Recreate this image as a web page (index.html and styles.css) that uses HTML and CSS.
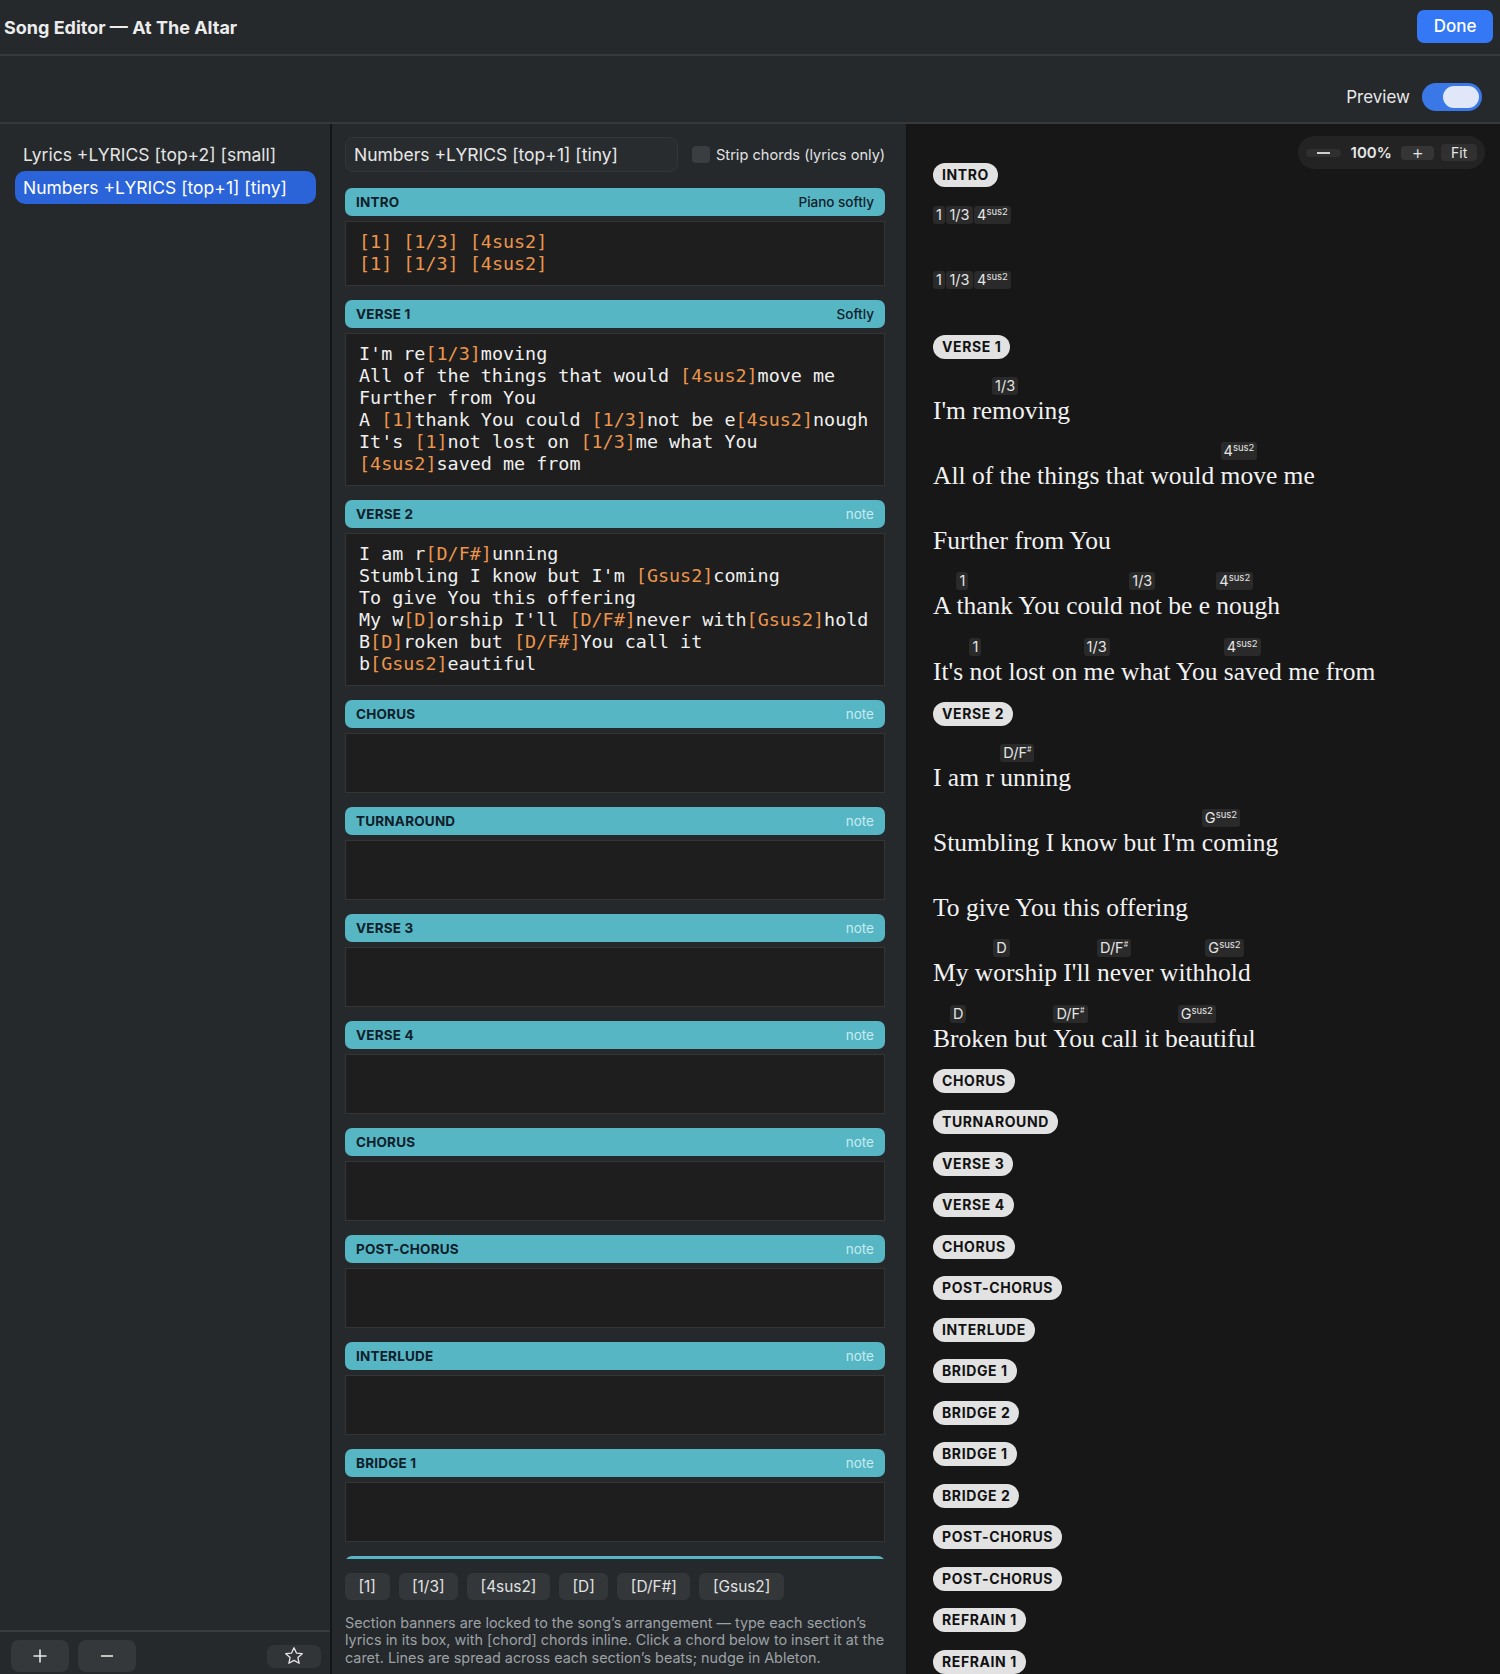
FILE: index.html
```html
<!DOCTYPE html>
<html lang="en">
<head>
    <meta charset="UTF-8">
    <meta name="viewport" content="width=device-width, initial-scale=1.0">
    <title>Song Editor — At The Altar</title>
    <link rel="stylesheet" href="styles.css">
</head>
<body>

    <header class="topbar">
        <div class="title">Song Editor — At The Altar</div>
        <button class="done">Done</button>
    </header>

    <div class="toolbar">
        <span class="toolbar-label">Preview</span>
        <span class="toggle on"><span class="knob"></span></span>
    </div>

    <div class="main">
        <!-- arrangement list -->
        <aside class="sidebar">
            <div class="side-list">
                <div class="side-item">Lyrics +LYRICS [top+2] [small]</div>
                <div class="side-item active">Numbers +LYRICS [top+1] [tiny]</div>
            </div>
            <div class="side-foot">
                <button class="foot-btn">
                    <svg width="16" height="16" viewBox="0 0 16 16"><path d="M8 1.5v13M1.5 8h13" stroke="#e6e6e6" stroke-width="1.6" fill="none"/></svg>
                </button>
                <button class="foot-btn">
                    <svg width="16" height="16" viewBox="0 0 16 16"><path d="M2 8h12" stroke="#e6e6e6" stroke-width="1.6" fill="none"/></svg>
                </button>
                <button class="foot-btn star">
                    <svg width="20" height="20" viewBox="0 0 20 20"><path d="M10 1.8l2.45 5.3 5.8.6-4.35 3.9 1.25 5.7L10 14.4l-5.15 2.9 1.25-5.7L1.75 7.7l5.8-.6z" stroke="#e6e6e6" stroke-width="1.3" stroke-linejoin="round" fill="none"/></svg>
                </button>
            </div>
        </aside>

        <!-- editor -->
        <section class="editor">
            <div class="title-row">
                <div class="name-input">Numbers +LYRICS [top+1] [tiny]</div>
                <label class="strip"><span class="checkbox"></span>Strip chords (lyrics only)</label>
            </div>

            <div class="sections">
                <div class="section">
                    <div class="banner"><span class="banner-name">INTRO</span><span class="banner-note set">Piano softly</span></div>
                    <div class="box"><span class="ch">[1]</span> <span class="ch">[1/3]</span> <span class="ch">[4sus2]</span>
<span class="ch">[1]</span> <span class="ch">[1/3]</span> <span class="ch">[4sus2]</span></div>
                </div>
                <div class="section">
                    <div class="banner"><span class="banner-name">VERSE 1</span><span class="banner-note set">Softly</span></div>
                    <div class="box">I'm re<span class="ch">[1/3]</span>moving
All of the things that would <span class="ch">[4sus2]</span>move me
Further from You
A <span class="ch">[1]</span>thank You could <span class="ch">[1/3]</span>not be e<span class="ch">[4sus2]</span>nough
It's <span class="ch">[1]</span>not lost on <span class="ch">[1/3]</span>me what You
<span class="ch">[4sus2]</span>saved me from</div>
                </div>
                <div class="section">
                    <div class="banner"><span class="banner-name">VERSE 2</span><span class="banner-note">note</span></div>
                    <div class="box">I am r<span class="ch">[D/F#]</span>unning
Stumbling I know but I'm <span class="ch">[Gsus2]</span>coming
To give You this offering
My w<span class="ch">[D]</span>orship I'll <span class="ch">[D/F#]</span>never with<span class="ch">[Gsus2]</span>hold
B<span class="ch">[D]</span>roken but <span class="ch">[D/F#]</span>You call it
b<span class="ch">[Gsus2]</span>eautiful</div>
                </div>
                <div class="section">
                    <div class="banner"><span class="banner-name">CHORUS</span><span class="banner-note">note</span></div>
                    <div class="box"></div>
                </div>
                <div class="section">
                    <div class="banner"><span class="banner-name">TURNAROUND</span><span class="banner-note">note</span></div>
                    <div class="box"></div>
                </div>
                <div class="section">
                    <div class="banner"><span class="banner-name">VERSE 3</span><span class="banner-note">note</span></div>
                    <div class="box"></div>
                </div>
                <div class="section">
                    <div class="banner"><span class="banner-name">VERSE 4</span><span class="banner-note">note</span></div>
                    <div class="box"></div>
                </div>
                <div class="section">
                    <div class="banner"><span class="banner-name">CHORUS</span><span class="banner-note">note</span></div>
                    <div class="box"></div>
                </div>
                <div class="section">
                    <div class="banner"><span class="banner-name">POST-CHORUS</span><span class="banner-note">note</span></div>
                    <div class="box"></div>
                </div>
                <div class="section">
                    <div class="banner"><span class="banner-name">INTERLUDE</span><span class="banner-note">note</span></div>
                    <div class="box"></div>
                </div>
                <div class="section">
                    <div class="banner"><span class="banner-name">BRIDGE 1</span><span class="banner-note">note</span></div>
                    <div class="box"></div>
                </div>
                <div class="section">
                    <div class="banner"><span class="banner-name">BRIDGE 2</span><span class="banner-note">note</span></div>
                    <div class="box"></div>
                </div>
            </div>

            <div class="chord-bar">
                <button class="chord-btn">[1]</button>
                <button class="chord-btn">[1/3]</button>
                <button class="chord-btn">[4sus2]</button>
                <button class="chord-btn">[D]</button>
                <button class="chord-btn">[D/F#]</button>
                <button class="chord-btn">[Gsus2]</button>
            </div>
            <p class="help">Section banners are locked to the song’s arrangement — type each section’s lyrics in its box, with [chord] chords inline. Click a chord below to insert it at the caret. Lines are spread across each section’s beats; nudge in Ableton.</p>
        </section>

        <!-- preview -->
        <section class="preview">
            <div class="zoom">
                <span class="zoom-minus"><span></span></span>
                <span class="zoom-value">100%</span>
                <span class="zoom-plus">+</span>
                <span class="zoom-fit">Fit</span>
            </div>

            <div class="psec">
                <div class="pill">INTRO</div>
                <div class="pline"><span class="seg"><span class="chip">1</span> </span><span class="seg"><span class="chip">1/3</span> </span><span class="seg"><span class="chip">4<sup>sus2</sup></span></span></div>
                <div class="pline"><span class="seg"><span class="chip">1</span> </span><span class="seg"><span class="chip">1/3</span> </span><span class="seg"><span class="chip">4<sup>sus2</sup></span></span></div>
            </div>

            <div class="psec">
                <div class="pill">VERSE 1</div>
                <div class="pline"><span class="seg bare">I'm re</span><span class="seg"><span class="chip">1/3</span>moving</span></div>
                <div class="pline"><span class="seg bare">All of the things that would </span><span class="seg"><span class="chip">4<sup>sus2</sup></span>move me</span></div>
                <div class="pline"><span class="seg bare">Further from You</span></div>
                <div class="pline"><span class="seg bare">A </span><span class="seg"><span class="chip">1</span>thank You could </span><span class="seg"><span class="chip">1/3</span>not be e </span><span class="seg"><span class="chip">4<sup>sus2</sup></span>nough</span></div>
                <div class="pline"><span class="seg bare">It's </span><span class="seg"><span class="chip">1</span>not lost on </span><span class="seg"><span class="chip">1/3</span>me what You </span><span class="seg"><span class="chip">4<sup>sus2</sup></span>saved me from</span></div>
            </div>

            <div class="psec">
                <div class="pill">VERSE 2</div>
                <div class="pline"><span class="seg bare">I am r </span><span class="seg"><span class="chip">D/F<sup class="acc">#</sup></span>unning</span></div>
                <div class="pline"><span class="seg bare">Stumbling I know but I'm </span><span class="seg"><span class="chip">G<sup>sus2</sup></span>coming</span></div>
                <div class="pline"><span class="seg bare">To give You this offering</span></div>
                <div class="pline"><span class="seg bare">My w</span><span class="seg"><span class="chip">D</span>orship I'll </span><span class="seg"><span class="chip">D/F<sup class="acc">#</sup></span>never with</span><span class="seg"><span class="chip">G<sup>sus2</sup></span>hold</span></div>
                <div class="pline"><span class="seg bare">B</span><span class="seg"><span class="chip">D</span>roken but </span><span class="seg"><span class="chip">D/F<sup class="acc">#</sup></span>You call it b</span><span class="seg"><span class="chip">G<sup>sus2</sup></span>eautiful</span></div>
            </div>

            <div class="psec"><div class="pill">CHORUS</div></div>
            <div class="psec"><div class="pill">TURNAROUND</div></div>
            <div class="psec"><div class="pill">VERSE 3</div></div>
            <div class="psec"><div class="pill">VERSE 4</div></div>
            <div class="psec"><div class="pill">CHORUS</div></div>
            <div class="psec"><div class="pill">POST-CHORUS</div></div>
            <div class="psec"><div class="pill">INTERLUDE</div></div>
            <div class="psec"><div class="pill">BRIDGE 1</div></div>
            <div class="psec"><div class="pill">BRIDGE 2</div></div>
            <div class="psec"><div class="pill">BRIDGE 1</div></div>
            <div class="psec"><div class="pill">BRIDGE 2</div></div>
            <div class="psec"><div class="pill">POST-CHORUS</div></div>
            <div class="psec"><div class="pill">POST-CHORUS</div></div>
            <div class="psec"><div class="pill">REFRAIN 1</div></div>
            <div class="psec"><div class="pill">REFRAIN 1</div></div>
        </section>
    </div>

</body>
</html>
```

FILE: styles.css
```css
* {
    box-sizing: border-box;
}
body {
    margin: 0;
    height: 1674px;
    overflow: hidden;
    display: flex;
    flex-direction: column;
    background: #25292c;
    color: #e6e6e6;
    font-family: Inter, "Noto Sans", sans-serif;
}
button {
    font-family: inherit;
    border: none;
    cursor: pointer;
}

/* top bar */
.topbar {
    height: 56px;
    flex-shrink: 0;
    display: flex;
    align-items: center;
    justify-content: space-between;
    padding: 0 7px 0 4px;
    border-bottom: 2px solid #35393c;
}
.title {
    font-size: 18px;
    font-weight: 700;
    color: #ececec;
}
.done {
    width: 76px;
    height: 33px;
    margin-top: -2px;
    background: #3478f6;
    color: #fff;
    font-size: 17px;
    font-weight: 500;
    border-radius: 7px;
}

.toolbar {
    height: 68px;
    flex-shrink: 0;
    display: flex;
    justify-content: flex-end;
    align-items: center;
    gap: 12px;
    padding: 15px 18px 0 0;
    border-bottom: 2px solid #35393c;
}
.toolbar-label {
    font-size: 17px;
    color: #e8e8e8;
}
.toggle {
    width: 60px;
    height: 28px;
    border-radius: 14px;
    background: #3a78e8;
    display: flex;
    align-items: center;
    justify-content: flex-end;
    padding: 0 3px;
}
.knob {
    width: 36px;
    height: 22px;
    border-radius: 11px;
    background: #dfe7f8;
}

.main {
    flex: 1;
    display: flex;
    min-height: 0;
}

/* sidebar */
.sidebar {
    width: 332px;
    flex-shrink: 0;
    display: flex;
    flex-direction: column;
    border-right: 2px solid #131517;
}
.side-list {
    flex: 1;
    padding: 14px 14px 0 15px;
}
.side-item {
    height: 33px;
    line-height: 33px;
    padding: 0 8px;
    font-size: 17.5px;
    color: #e4e4e4;
    border-radius: 10px;
    white-space: nowrap;
}
.side-item.active {
    background: #2b63d9;
    color: #fff;
}
.side-foot {
    height: 44px;
    display: flex;
    align-items: center;
    gap: 9px;
    padding: 6px 9px 0 11px;
    border-top: 2px solid #383c3f;
}
.foot-btn {
    width: 58px;
    height: 32px;
    border-radius: 8px;
    background: #34383b;
    display: flex;
    align-items: center;
    justify-content: center;
}
.foot-btn.star {
    width: 54px;
    height: 23px;
    margin-left: auto;
    border-radius: 7px;
    background: #313538;
}

/* editor column */
.editor {
    width: 576px;
    flex-shrink: 0;
    display: flex;
    flex-direction: column;
    padding: 13px 21px 8px 13px;
    border-right: 2px solid #131517;
}
.title-row {
    display: flex;
    align-items: center;
    gap: 14px;
    white-space: nowrap;
}
.name-input {
    width: 333px;
    height: 35px;
    flex-shrink: 0;
    line-height: 33px;
    padding-left: 8px;
    font-size: 17.5px;
    color: #e8e8e8;
    background: #282c2f;
    border: 1px solid #32363a;
    border-radius: 8px;
}
.strip {
    display: flex;
    align-items: center;
    gap: 6px;
    font-size: 14.6px;
    color: #e2e2e2;
}
.checkbox {
    width: 18px;
    height: 17px;
    flex-shrink: 0;
    border-radius: 4px;
    background: #3a3e41;
}
.sections {
    flex: 1;
    min-height: 0;
    overflow: hidden;
    margin-top: 16px;
}
.section {
    margin-bottom: 14px;
}
.banner {
    height: 28px;
    border-radius: 7px;
    background: #57b6c4;
    display: flex;
    align-items: center;
    justify-content: space-between;
    padding: 0 11px;
    font-size: 13.5px;
}
.banner-name {
    font-weight: 700;
    color: #10202a;
    letter-spacing: 0.2px;
}
.banner-note {
    color: #c6ebf0;
}
.banner-note.set {
    color: #10202a;
    font-weight: 500;
}
.box {
    margin-top: 5px;
    min-height: 60px;
    padding: 9px 13px 10px;
    background: #1e1e1e;
    border: 1px solid #353535;
    font-family: "DejaVu Sans Mono", "Liberation Mono", monospace;
    font-size: 18.4px;
    line-height: 22px;
    white-space: pre;
    color: #f0f0f0;
}
.ch {
    color: #eb954c;
}
.chord-bar {
    display: flex;
    gap: 9px;
    margin-top: 14px;
}
.chord-btn {
    height: 27px;
    padding: 0 13.5px;
    border-radius: 6px;
    background: #33373a;
    color: #e2e2e2;
    font-size: 15.4px;
}
.help {
    margin: 14px 0 0;
    font-size: 14.4px;
    line-height: 17.5px;
    color: #9da1a5;
}

/* preview */
.preview {
    flex: 1;
    position: relative;
    overflow: hidden;
    background: #171717;
    padding: 39px 25px 0;
}
.zoom {
    position: absolute;
    top: 12px;
    right: 15px;
    width: 187px;
    height: 33px;
    border-radius: 17px;
    background: #232323;
    display: flex;
    align-items: center;
    padding: 0 8px;
    font-size: 14px;
    color: #e6e6e6;
}
.zoom-minus {
    width: 35px;
    height: 8px;
    border-radius: 4px;
    background: #2f2f2f;
    display: flex;
    align-items: center;
    justify-content: center;
}
.zoom-minus span {
    width: 13px;
    height: 2px;
    background: #cfcfcf;
}
.zoom-value {
    margin-left: 10px;
    font-size: 15px;
    font-weight: 600;
}
.zoom-plus {
    width: 34px;
    height: 14px;
    margin-left: 9px;
    border-radius: 4px;
    background: #353535;
    display: flex;
    align-items: center;
    justify-content: center;
    font-size: 19px;
    font-weight: 300;
}
.zoom-fit {
    width: 36px;
    height: 17px;
    margin-left: 7px;
    border-radius: 4px;
    background: #303030;
    display: flex;
    align-items: center;
    justify-content: center;
}
.psec .pill {
    width: max-content;
    height: 24px;
    line-height: 24px;
    padding: 0 9px;
    border-radius: 12px;
    background: #e2e2e2;
    color: #111;
    font-size: 14px;
    font-weight: 700;
    letter-spacing: 0.6px;
    margin-bottom: 17.5px;
}
.pline {
    height: 50px;
    margin-bottom: 15.1px;
    display: flex;
}
.seg {
    display: flex;
    flex-direction: column;
    align-items: flex-start;
    white-space: pre;
    font-family: "Liberation Serif", serif;
    font-size: 25.5px;
    line-height: 30px;
    color: #f2f2f2;
}
.seg.bare {
    padding-top: 20px;
}
.chip {
    height: 18px;
    line-height: 18px;
    margin: 1px 1.5px 1px 0;
    padding: 0 3px;
    border-radius: 3px;
    background: #2a2a2a;
    font-family: Inter, "Noto Sans", sans-serif;
    font-size: 14.5px;
    color: #e6e6e6;
}
.chip sup {
    font-size: 9.5px;
    line-height: 9px;
    vertical-align: 5px;
}
.chip sup.acc {
    font-size: 7px;
    vertical-align: 6px;
}
```
